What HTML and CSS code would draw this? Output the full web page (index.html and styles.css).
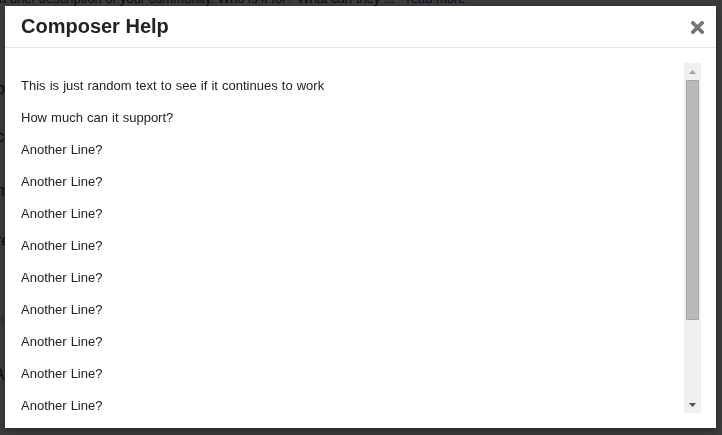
FILE: index.html
```html
<!DOCTYPE html>
<html>
<head>
<meta charset="utf-8">
<title>Composer Help</title>
<link rel="stylesheet" href="styles.css">
</head>
<body>
<div class="page">
  <p class="desc">a brief description of your community. Who is it for? What can they ... <a class="more">read more</a></p>
  <div class="bg-lines">
    <p class="bg-line l1">basic</p>
    <p class="bg-line l2">categories</p>
    <p class="bg-line l3">members</p>
    <p class="bg-line l4">recent</p>
    <p class="bg-line l5 faint">everything</p>
    <p class="bg-line l6">About</p>
  </div>
</div>
<div class="overlay"></div>
<div class="modal">
  <div class="modal-header">
    <h3 class="modal-title">Composer Help</h3>
    <button class="close" aria-label="Close">
      <svg width="13" height="13" viewBox="0 0 13 13"><path d="M2 2 L11 11 M11 2 L2 11" stroke="#777" stroke-width="3.8" stroke-linecap="square"/></svg>
    </button>
  </div>
  <div class="modal-body">
    <div class="scroll-wrap">
      <div class="scroll">
        <p>This is just random text to see if it continues to work</p>
        <p>How much can it support?</p>
        <p>Another Line?</p>
        <p>Another Line?</p>
        <p>Another Line?</p>
        <p>Another Line?</p>
        <p>Another Line?</p>
        <p>Another Line?</p>
        <p>Another Line?</p>
        <p>Another Line?</p>
        <p>Another Line?</p>
        <p>Another Line?</p>
        <p>Another Line?</p>
        <p>Another Line?</p>
      </div>
      <div class="scrollbar">
        <div class="sb-btn">
          <svg width="7" height="4" viewBox="0 0 7 4"><path d="M0 4 L3.5 0 L7 4 Z" fill="#a3a3a3"/></svg>
        </div>
        <div class="sb-thumb"></div>
        <div class="sb-rest"></div>
        <div class="sb-btn">
          <svg width="7" height="4" viewBox="0 0 7 4"><path d="M0 0 L7 0 L3.5 4 Z" fill="#505050"/></svg>
        </div>
      </div>
    </div>
  </div>
</div>
</body>
</html>
```
FILE: styles.css
```css
html, body {
  margin: 0;
  padding: 0;
  height: 100%;
  overflow: hidden;
  background: #fff;
  font-family: "Liberation Sans", Arial, sans-serif;
}

.page {
  color: #333;
}

.desc {
  margin: -9px 0 0 -1px;
  font-size: 13px;
  line-height: 16px;
  white-space: nowrap;
}

.more {
  color: #0a4c8c;
  margin-left: 8px;
}

.bg-lines {
  display: flex;
  flex-direction: column;
}

.bg-line {
  margin: 0;
  font-size: 16px;
  line-height: 20px;
  margin-left: -4px;
}

.l1 { margin-top: 72px; }
.l2 { margin-top: 28px; color: #222; }
.l3 { margin-top: 34px; color: #0a4c8c; }
.l4 { margin-top: 30px; }
.l5 { margin-top: 60px; }
.l6 { margin-top: 34px; margin-left: -6px; }
.faint { color: #bbb; }

.overlay {
  position: fixed;
  inset: 0;
  background: rgba(0, 0, 0, 0.77);
}

.modal {
  position: fixed;
  top: 6px;
  left: 5px;
  width: 711px;
  height: 422px;
  background: #fff;
  box-shadow: 0 3px 7px rgba(0, 0, 0, 0.3);
  display: flex;
  flex-direction: column;
}

.modal-header {
  display: flex;
  align-items: center;
  justify-content: space-between;
  padding: 9px 12px 10px 16px;
  border-bottom: 1px solid #e5e5e5;
}

.modal-title {
  margin: 0;
  font-size: 20px;
  line-height: 22px;
  font-weight: bold;
  color: #222;
}

.close {
  border: 0;
  background: none;
  padding: 0;
  margin-top: 3px;
  width: 13px;
  height: 13px;
  display: flex;
  cursor: pointer;
}

.modal-body {
  padding: 15px 15px 15px 16px;
  flex: 1;
  min-height: 0;
}

.scroll-wrap {
  display: flex;
  height: 350px;
}

.scroll {
  flex: 1;
  overflow: hidden;
  padding-top: 13px;
}

.scroll p {
  margin: 0 0 12px;
  font-size: 13px;
  line-height: 20px;
  word-spacing: 0.5px;
  color: #222;
}

.scrollbar {
  width: 17px;
  background: #f0f0f0;
  display: flex;
  flex-direction: column;
}

.sb-btn {
  height: 17px;
  display: flex;
  align-items: center;
  justify-content: center;
}

.sb-thumb {
  height: 238px;
  margin: 0 2px;
  background: #bababa;
  border: 1px solid #a6a6a6;
}

.sb-rest {
  flex: 1;
}
```
